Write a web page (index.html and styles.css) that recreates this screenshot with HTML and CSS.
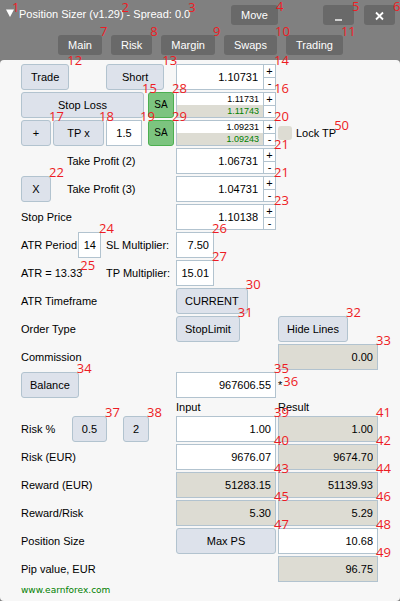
FILE: index.html
```html
<!DOCTYPE html>
<html lang="en">

<head>
  <meta charset="UTF-8">
  <meta name="viewport" content="width=device-width, initial-scale=1.0">
  <title>Position Sizer</title>
  <link rel="stylesheet" href="styles.css">
</head>

<body>
  <!-- Title bar and tabs -->
  <header class="header">
    <div class="title-bar">
      <span class="mark top corner"><svg class="arrow" viewBox="0 0 8 8"><path d="M0 0.5h8L4 8z" fill="#fff"/></svg><span class="badge">1</span></span>
      <h1 class="title"><span class="mark top">Position Sizer (v1.29)<span class="badge">2</span></span> - <span class="mark top">Spread: 0.0<span class="badge">3</span></span></h1>
      <span class="mark top move"><button class="dark">Move</button><span class="badge">4</span></span>
      <span class="mark top"><button class="dark icon" aria-label="Minimize"><svg viewBox="0 0 11 11"><path d="M2 10h7" stroke="#fff" stroke-width="1.4"/></svg></button><span class="badge">5</span></span>
      <span class="mark top"><button class="dark icon" aria-label="Close"><svg viewBox="0 0 11 11"><path d="M2 2.5l7 7M9 2.5l-7 7" stroke="#fff" stroke-width="1.8"/></svg></button><span class="badge">6</span></span>
    </div>
    <nav class="tabs">
      <span class="mark"><button class="dark">Main</button><span class="badge">7</span></span>
      <span class="mark"><button class="dark">Risk</button><span class="badge">8</span></span>
      <span class="mark"><button class="dark">Margin</button><span class="badge">9</span></span>
      <span class="mark"><button class="dark">Swaps</button><span class="badge">10</span></span>
      <span class="mark"><button class="dark">Trading</button><span class="badge">11</span></span>
    </nav>
  </header>

  <main class="panel">
    <!-- Entry, stop-loss and take-profit levels -->
    <div class="row">
      <div class="left two">
        <span class="mark"><button class="btn">Trade</button><span class="badge">12</span></span>
        <span class="mark"><button class="btn wide">Short</button><span class="badge">13</span></span>
      </div>
      <div class="mark spinner">
        <input class="field" type="text" value="1.10731" aria-label="Entry">
        <div class="steps"><button>+</button><button>-</button></div>
        <span class="badge">14</span>
      </div>
    </div>

    <div class="row">
      <div class="left sa-row">
        <span class="mark grow"><button class="btn">Stop Loss</button><span class="badge">15</span></span>
        <span class="mark"><button class="btn sa">SA</button><span class="badge">28</span></span>
      </div>
      <div class="mark spinner">
        <div class="pair">
          <input class="field" type="text" value="1.11731" aria-label="Stop loss">
          <input class="field saved" type="text" value="1.11743" aria-label="Saved stop loss" readonly>
        </div>
        <div class="steps"><button>+</button><button>-</button></div>
        <span class="badge">16</span>
      </div>
    </div>

    <div class="row">
      <div class="left tp-row">
        <span class="mark plus"><button class="btn">+</button><span class="badge">17</span></span>
        <span class="mark grow inner"><button class="btn">TP x</button><span class="badge">18</span></span>
        <span class="mark ratio"><input class="field center" type="text" value="1.5" aria-label="TP multiplier"><span class="badge">19</span></span>
        <span class="mark"><button class="btn sa">SA</button><span class="badge">29</span></span>
      </div>
      <div class="mark spinner">
        <div class="pair">
          <input class="field" type="text" value="1.09231" aria-label="Take profit">
          <input class="field saved" type="text" value="1.09243" aria-label="Saved take profit" readonly>
        </div>
        <div class="steps"><button>+</button><button>-</button></div>
        <span class="badge">20</span>
      </div>
      <label class="lock"><input type="checkbox"><span class="mark">Lock TP<span class="badge">50</span></span></label>
    </div>

    <div class="row">
      <div class="left extra">
        <label class="second" for="tp2">Take Profit (2)</label>
      </div>
      <div class="mark spinner">
        <input class="field" id="tp2" type="text" value="1.06731">
        <div class="steps"><button>+</button><button>-</button></div>
        <span class="badge">21</span>
      </div>
    </div>

    <div class="row">
      <div class="left extra">
        <span class="mark"><button class="btn">X</button><span class="badge">22</span></span>
        <label class="second" for="tp3">Take Profit (3)</label>
      </div>
      <div class="mark spinner">
        <input class="field" id="tp3" type="text" value="1.04731">
        <div class="steps"><button>+</button><button>-</button></div>
        <span class="badge">21</span>
      </div>
    </div>

    <div class="row">
      <label for="stop-price">Stop Price</label>
      <div class="mark spinner">
        <input class="field" id="stop-price" type="text" value="1.10138">
        <div class="steps"><button>+</button><button>-</button></div>
        <span class="badge">23</span>
      </div>
    </div>

    <!-- ATR options -->
    <div class="row">
      <div class="left two">
        <div class="period">
          <label for="atr-period">ATR Period</label>
          <span class="mark"><input class="field" id="atr-period" type="text" value="14"><span class="badge">24</span></span>
        </div>
        <label for="sl-mult">SL Multiplier:</label>
      </div>
      <span class="mark short"><input class="field" id="sl-mult" type="text" value="7.50"><span class="badge">26</span></span>
    </div>

    <div class="row">
      <div class="left two">
        <span class="mark low">ATR = 13.33<span class="badge">25</span></span>
        <label for="tp-mult">TP Multiplier:</label>
      </div>
      <span class="mark short"><input class="field" id="tp-mult" type="text" value="15.01"><span class="badge">27</span></span>
    </div>

    <div class="row">
      <span>ATR Timeframe</span>
      <span class="mark fit"><button class="btn">CURRENT</button><span class="badge">30</span></span>
    </div>

    <div class="row">
      <span>Order Type</span>
      <span class="mark fit"><button class="btn">StopLimit</button><span class="badge">31</span></span>
      <span class="mark fit"><button class="btn">Hide Lines</button><span class="badge">32</span></span>
    </div>

    <div class="row">
      <label for="commission">Commission</label>
      <span class="mark result"><input class="field off" id="commission" type="text" value="0.00" readonly><span class="badge">33</span></span>
    </div>

    <!-- Account, risk and reward -->
    <div class="row">
      <span class="mark fit"><button class="btn">Balance</button><span class="badge">34</span></span>
      <span class="mark"><input class="field" type="text" value="967606.55" aria-label="Balance"><span class="badge">35</span></span>
      <span class="mark fit star">*<span class="badge">36</span></span>
    </div>

    <div class="row heads">
      <span class="input-head">Input</span>
      <span>Result</span>
    </div>

    <div class="row">
      <div class="left risk">
        <label for="risk">Risk %</label>
        <span class="mark"><button class="btn">0.5</button><span class="badge">37</span></span>
        <span class="mark"><button class="btn">2</button><span class="badge">38</span></span>
      </div>
      <span class="mark"><input class="field" id="risk" type="text" value="1.00"><span class="badge">39</span></span>
      <span class="mark"><input class="field off" type="text" value="1.00" aria-label="Risk % result" readonly><span class="badge">41</span></span>
    </div>

    <div class="row">
      <label for="risk-money">Risk (EUR)</label>
      <span class="mark"><input class="field" id="risk-money" type="text" value="9676.07"><span class="badge">40</span></span>
      <span class="mark"><input class="field off" type="text" value="9674.70" aria-label="Risk result" readonly><span class="badge">42</span></span>
    </div>

    <div class="row">
      <label for="reward">Reward (EUR)</label>
      <span class="mark"><input class="field off" id="reward" type="text" value="51283.15" readonly><span class="badge">43</span></span>
      <span class="mark"><input class="field off" type="text" value="51139.93" aria-label="Reward result" readonly><span class="badge">44</span></span>
    </div>

    <div class="row">
      <label for="ratio">Reward/Risk</label>
      <span class="mark"><input class="field off" id="ratio" type="text" value="5.30" readonly><span class="badge">45</span></span>
      <span class="mark"><input class="field off" type="text" value="5.29" aria-label="Reward/Risk result" readonly><span class="badge">46</span></span>
    </div>

    <div class="row">
      <label for="size">Position Size</label>
      <span class="mark"><button class="btn">Max PS</button><span class="badge">47</span></span>
      <span class="mark"><input class="field" id="size" type="text" value="10.68"><span class="badge">48</span></span>
    </div>

    <div class="row">
      <label for="pip">Pip value, EUR</label>
      <span class="mark result"><input class="field off" id="pip" type="text" value="96.75" readonly><span class="badge">49</span></span>
    </div>

    <a class="site" href="#">www.earnforex.com</a>
  </main>
</body>

</html>
```

FILE: styles.css
```css
/* General styling */
* {
  box-sizing: border-box;
}

body {
  margin: 0;
  background: #808080;
  color: #000;
  font-family: "Liberation Sans", Arial, sans-serif;
  font-size: 11px;
  line-height: 14px;
}

button,
input {
  margin: 0;
  font: inherit;
  color: inherit;
}

button {
  cursor: pointer;
}

/* Wrapper that carries a red number on its top right corner */
.mark {
  position: relative;
  display: block;
  min-width: 0;
}

.badge {
  position: absolute;
  left: 100%;
  top: -11px;
  z-index: 1;
  margin-left: -2px;
  color: #ed1c24;
  font-family: "Open Sans", "Noto Sans", sans-serif;
  font-size: 13px;
  line-height: 14px;
  pointer-events: none;
}

.top .badge {
  top: -6px;
}

/* Header */
.header {
  padding: 5px 5px 5px 6px;
  color: #fff;
}

.title-bar {
  display: flex;
  align-items: center;
  gap: 10px;
  height: 20px;
}

.corner {
  padding-bottom: 4px;
}

.corner .badge {
  top: -9px;
}

.arrow {
  display: block;
  width: 8px;
  height: 8px;
}

.title {
  flex: 1;
  margin: 0 0 0 -5px;
  padding-bottom: 2px;
  font-size: 11px;
  font-weight: normal;
  white-space: nowrap;
}

.title .mark {
  display: inline-block;
}

.title .badge {
  top: -7px;
}

.move {
  margin-right: 35px;
}

.dark {
  display: block;
  height: 20px;
  padding: 0 10px;
  border: none;
  border-radius: 3px;
  background: #696969;
}

.icon svg {
  display: block;
  width: 11px;
  height: 11px;
}

.tabs {
  display: flex;
  justify-content: center;
  gap: 9px;
  margin-top: 10px;
}

/* Main panel */
.panel {
  display: flex;
  flex-direction: column;
  gap: 2px;
  padding: 4px 22px 4px 21px;
  border-radius: 4px;
  background: #f7f7f7;
}

.row {
  display: grid;
  grid-template-columns: minmax(0, 153fr) minmax(0, 100fr) minmax(0, 100fr);
  column-gap: 2px;
  align-items: center;
  height: 26px;
  white-space: nowrap;
}

.heads {
  height: 14px;
}

.input-head {
  grid-column: 2;
}

.result {
  grid-column: 3;
}

/* Left column layouts */
.left {
  display: grid;
  align-items: center;
}

.two {
  grid-template-columns: 85px 1fr;
}

.two > .mark {
  justify-self: start;
}

.sa-row,
.tp-row {
  display: flex;
  gap: 2px;
}

.sa-row {
  gap: 4px;
}

.grow {
  flex: 1;
}

.inner .badge {
  margin-left: -5px;
}

.plus {
  width: 30px;
}

.ratio {
  width: 36px;
  margin-right: 4px;
}

.extra {
  grid-template-columns: 30px 1fr;
  column-gap: 16px;
}

.second {
  grid-column: 2;
}

.period {
  display: flex;
  align-items: center;
  justify-content: space-between;
  padding-right: 5px;
}

.period .mark {
  width: 23px;
}

.risk {
  grid-template-columns: 35px 35px 26px;
  column-gap: 16px;
}

.fit {
  justify-self: start;
}

.short {
  width: 38px;
}

.star .badge {
  top: -4px;
  margin-left: 1px;
}

.low .badge,
.lock .badge {
  top: -8px;
}

/* Buttons and fields */
.btn {
  display: block;
  width: 100%;
  height: 26px;
  padding: 0 9px;
  border: 1px solid #b2c3cf;
  border-radius: 3px;
  background: #dde2eb;
}

.wide {
  padding: 0 15px;
}

.fit .btn {
  padding: 0 8px;
}

.plus .btn,
.extra .btn,
.risk .btn {
  padding: 0;
}

.sa {
  width: 26px;
  padding: 0;
  border-color: #4caf50;
  background: #7cc47f;
  font-size: 10px;
}

.field {
  display: block;
  width: 100%;
  height: 26px;
  padding: 0 4px;
  border: 1px solid #b2c3cf;
  border-radius: 0;
  background: #fff;
  text-align: right;
}

.center {
  text-align: center;
}

.off {
  background: #dddcd3;
}

/* Price field with plus and minus steps */
.spinner {
  display: flex;
  height: 26px;
  border: 1px solid #b2c3cf;
  background: #fff;
}

.spinner .field {
  flex: 1;
  min-width: 0;
  height: 24px;
  padding: 0 5px;
  border: none;
}

.spinner > .badge {
  top: -12px;
  margin-left: -1px;
}

.pair {
  display: flex;
  flex: 1;
  flex-direction: column;
  min-width: 0;
}

.pair .field {
  flex: none;
  height: 12px;
  padding: 0 4px;
  font-size: 9px;
}

.pair .saved {
  background: #dddcd3;
  color: #008000;
}

.steps {
  display: flex;
  flex-direction: column;
  width: 12px;
  border-left: 1px solid #b2c3cf;
}

.steps button {
  flex: 1;
  padding: 0;
  border: none;
  background: #fff;
  line-height: 10px;
}

.steps button + button {
  border-top: 1px solid #b2c3cf;
}

/* Lock TP check box */
.lock {
  display: flex;
  align-items: center;
  gap: 4px;
}

.lock input {
  width: 14px;
  height: 14px;
  border-radius: 3px;
  background: #dddcd3;
  appearance: none;
}

/* Site link */
.site {
  align-self: flex-start;
  color: #008000;
  font-family: "DejaVu Sans", Verdana, sans-serif;
  font-size: 9px;
  line-height: 13px;
  text-decoration: none;
}
```
